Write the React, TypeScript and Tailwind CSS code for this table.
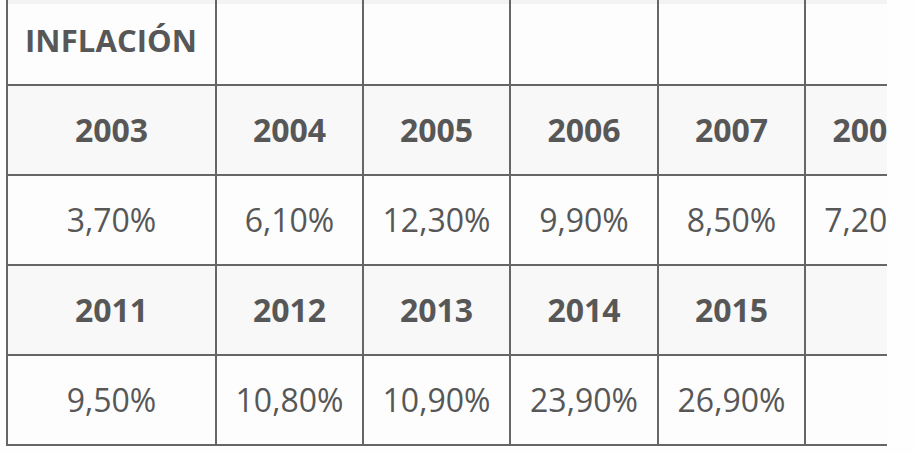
import React from "react";

const widths = [209, 147, 147, 148, 147, 128];

const rows: { kind: "head" | "year" | "val"; cells: string[] }[] = [
  { kind: "head", cells: ["INFLACIÓN", "", "", "", "", ""] },
  { kind: "year", cells: ["2003", "2004", "2005", "2006", "2007", "2008"] },
  { kind: "val", cells: ["3,70%", "6,10%", "12,30%", "9,90%", "8,50%", "7,20%"] },
  { kind: "year", cells: ["2011", "2012", "2013", "2014", "2015", ""] },
  { kind: "val", cells: ["9,50%", "10,80%", "10,90%", "23,90%", "26,90%", ""] },
];

export default function App() {
  return (
    <div
      className="w-[916px] h-[453px] bg-[#fefefe] overflow-hidden"
      style={{ fontFamily: '"Open Sans", "Noto Sans", sans-serif' }}
    >
      <div className="ml-[6px] mt-[-6px] w-[881px] overflow-hidden">
        <div className="w-max border-l-2 border-t-2 border-[#666]">
          {rows.map((r, ri) => (
            <div key={ri} className="flex">
              {r.cells.map((c, ci) => {
                const base =
                  "h-[90px] shrink-0 border-r-2 border-b-2 border-[#666] flex items-center text-[#575757] whitespace-nowrap";
                const bg =
                  r.kind === "year"
                    ? " bg-[#f8f8f8]"
                    : r.kind === "head"
                    ? " bg-[#fdfdfd] shadow-[inset_0_8px_0_#f3f3f3]"
                    : " bg-[#fdfdfd]";
                const txt =
                  r.kind === "head"
                    ? " justify-start pl-[17px] text-[31px] font-bold tracking-[0.1px]"
                    : r.kind === "year"
                    ? " justify-center text-[32px] font-bold"
                    : " justify-center text-[32px] font-normal";
                return (
                  <div key={ci} className={base + bg + txt} style={{ width: widths[ci] }}>
                    {c}
                  </div>
                );
              })}
            </div>
          ))}
        </div>
      </div>
    </div>
  );
}
